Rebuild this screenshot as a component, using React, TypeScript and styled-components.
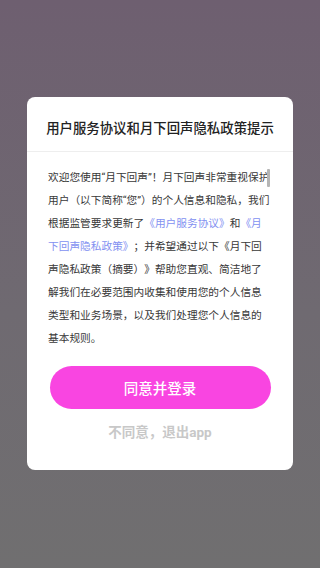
import React from "react";
import styled, { createGlobalStyle } from "styled-components";

const Global = createGlobalStyle`
  html, body { margin: 0; padding: 0; height: 100%; }
  body { font-family: Roboto, "Noto Sans CJK SC", sans-serif; }
  #root { height: 100%; }
`;

const Screen = styled.div`
  width: 320px;
  height: 568px;
  background: linear-gradient(180deg, #6e5f70 0%, #6f6a71 55%, #706f70 100%);
  display: flex;
  flex-direction: column;
  align-items: center;
  padding-top: 97px;
  box-sizing: border-box;
`;

const Card = styled.div`
  width: 266px;
  background: #fff;
  border-radius: 8px;
  display: flex;
  flex-direction: column;
  overflow: hidden;
`;

const Header = styled.div`
  padding: 21px 0 15px;
  border-bottom: 1px solid #eeeeee;
  text-align: center;
  font-family: "Noto Sans CJK SC", sans-serif;
  font-size: 13.4px;
  line-height: 18px;
  font-weight: 500;
  color: #222;
`;

const Body = styled.div`
  position: relative;
  padding: 14px 0 0 21px;
`;

const Text = styled.p`
  margin: 0;
  width: 222px;
  font-family: Roboto, "Noto Sans CJK SC", sans-serif;
  font-size: 10.7px;
  line-height: 23px;
  color: #383838;
  text-spacing-trim: space-all;
`;

const Link = styled.span`
  color: #8391f1;
`;

const Scrollbar = styled.div`
  position: absolute;
  right: 23px;
  top: 17px;
  width: 3px;
  height: 18px;
  background: #b5b5b5;
  border-radius: 1px;
`;

const Actions = styled.div`
  display: flex;
  flex-direction: column;
  align-items: center;
  padding: 16px 0 28px;
  gap: 13px;
`;

const AgreeButton = styled.button`
  width: 221px;
  height: 43px;
  border: none;
  border-radius: 22px;
  background: #f945e1;
  color: #fff;
  font-family: "Noto Sans CJK SC", sans-serif;
  font-size: 14.5px;
  font-weight: 500;
  cursor: pointer;
`;

const DeclineButton = styled.button`
  border: none;
  background: none;
  padding: 0;
  height: 20px;
  line-height: 20px;
  color: #c8c8c8;
  font-family: Roboto, "Noto Sans CJK SC", sans-serif;
  font-size: 13.5px;
  font-weight: 700;
  cursor: pointer;
`;

export default function App() {
  return (
    <>
      <Global />
      <Screen>
        <Card>
          <Header>用户服务协议和月下回声隐私政策提示</Header>
          <Body>
            <Text>
              欢迎您使用“月下回声”！月下回声非常重视保护用户（以下简称“您”）的个人信息和隐私，我们根据监管要求更新了
              <Link>《用户服务协议》</Link>和<Link>《月下回声隐私政策》</Link>
              ；并希望通过以下《月下回声隐私政策（摘要）》帮助您直观、简洁地了解我们在必要范围内收集和使用您的个人信息类型和业务场景，以及我们处理您个人信息的基本规则。
            </Text>
            <Scrollbar />
          </Body>
          <Actions>
            <AgreeButton>同意并登录</AgreeButton>
            <DeclineButton>不同意，退出app</DeclineButton>
          </Actions>
        </Card>
      </Screen>
    </>
  );
}
